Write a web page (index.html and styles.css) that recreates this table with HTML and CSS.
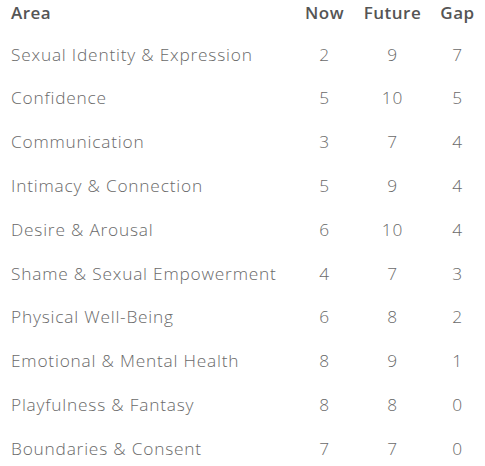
FILE: index.html
```html
<!DOCTYPE html>
<html>
<head>
<meta charset="utf-8">
<link rel="stylesheet" href="styles.css">
</head>
<body>
<div class="table">
  <div class="row head">
    <div class="area">Area</div><div class="num">Now</div><div class="num">Future</div><div class="num">Gap</div>
  </div>
  <div class="row"><div class="area">Sexual Identity &amp; Expression</div><div class="num">2</div><div class="num">9</div><div class="num">7</div></div>
  <div class="row"><div class="area">Confidence</div><div class="num">5</div><div class="num">10</div><div class="num">5</div></div>
  <div class="row"><div class="area">Communication</div><div class="num">3</div><div class="num">7</div><div class="num">4</div></div>
  <div class="row"><div class="area">Intimacy &amp; Connection</div><div class="num">5</div><div class="num">9</div><div class="num">4</div></div>
  <div class="row"><div class="area">Desire &amp; Arousal</div><div class="num">6</div><div class="num">10</div><div class="num">4</div></div>
  <div class="row"><div class="area">Shame &amp; Sexual Empowerment</div><div class="num">4</div><div class="num">7</div><div class="num">3</div></div>
  <div class="row"><div class="area">Physical Well-Being</div><div class="num">6</div><div class="num">8</div><div class="num">2</div></div>
  <div class="row"><div class="area">Emotional &amp; Mental Health</div><div class="num">8</div><div class="num">9</div><div class="num">1</div></div>
  <div class="row"><div class="area">Playfulness &amp; Fantasy</div><div class="num">8</div><div class="num">8</div><div class="num">0</div></div>
  <div class="row"><div class="area">Boundaries &amp; Consent</div><div class="num">7</div><div class="num">7</div><div class="num">0</div></div>
</div>
</body>
</html>
```
FILE: styles.css
```css
html, body {
  margin: 0;
  padding: 0;
  background: #ffffff;
}
body {
  font-family: "Open Sans", sans-serif;
  font-size: 17.3px;
  color: #6a6a6a;
  font-weight: 300;
  letter-spacing: 0.8px;
}
.table {
  display: flex;
  flex-direction: column;
}
.row {
  display: grid;
  grid-template-columns: 294px 61px 75px 55px;
  height: 43.8px;
  align-items: center;
}
.row.head {
  height: 24px;
  margin-bottom: 8.2px;
  font-weight: 600;
  color: #555555;
  font-size: 17px;
  letter-spacing: 0.5px;
}
.area {
  padding-left: 11px;
  white-space: nowrap;
}
.num {
  text-align: center;
}
```
